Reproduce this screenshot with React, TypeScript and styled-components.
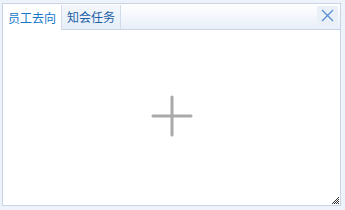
import React, { useState } from "react";
import styled, { createGlobalStyle } from "styled-components";

const GlobalStyle = createGlobalStyle`
    html, body {
        margin: 0;
        padding: 0;
        background: #eef2fa;
        font-family: "Noto Sans CJK SC", "Liberation Sans", sans-serif;
    }
`;

// 바깥 영역
const Page = styled.div`
    width: 345px;
    height: 210px;
    padding: 3px 4px 4px 2px;
    box-sizing: border-box;
    background: #eef2fa;
`;

// 패널
const Panel = styled.div`
    width: 100%;
    height: 100%;
    box-sizing: border-box;
    border: 1px solid #c9d5e5;
    background: #ffffff;
    display: flex;
    flex-direction: column;
    position: relative;
`;

// 탭 헤더
const TabBar = styled.div`
    height: 26px;
    box-sizing: border-box;
    display: flex;
    align-items: flex-end;
    padding-left: 0;
    background: linear-gradient(to bottom, #ffffff, #e8eff9);
    border-bottom: 1px solid #c9d5e5;
`;

const Tab = styled.div<{ $active?: boolean }>`
    height: 24px;
    box-sizing: border-box;
    padding: 0 5px;
    display: flex;
    align-items: center;
    font-size: 12px;
    line-height: 1;
    color: ${(p) => (p.$active ? "#1677c9" : "#1b5fa6")};
    background: ${(p) => (p.$active ? "#ffffff" : "linear-gradient(to bottom, #f4f7fc, #e6eef8)")};
    border-right: 1px solid #d3dcea;
    margin-bottom: ${(p) => (p.$active ? "-1px" : "0")};
    height: ${(p) => (p.$active ? "25px" : "24px")};
    cursor: pointer;
`;

const Spacer = styled.div`
    flex: 1;
`;

const CloseButton = styled.button`
    width: 21px;
    height: 20px;
    margin: 0 2px 2px 0;
    align-self: center;
    padding: 0;
    border: none;
    background: #eaf0f8;
    display: flex;
    align-items: center;
    justify-content: center;
    cursor: pointer;
`;

// 본문
const Body = styled.div`
    flex: 1;
    display: flex;
    align-items: center;
    justify-content: center;
    padding-bottom: 4px;
`;

const Grip = styled.svg`
    position: absolute;
    right: 1px;
    bottom: 1px;
`;

export default function App() {
    const [active, setActive] = useState(0);
    const tabs = ["员工去向", "知会任务"];
    return (
        <>
            <GlobalStyle />
            <Page>
                <Panel>
                    <TabBar>
                        {tabs.map((t, i) => (
                            <Tab key={t} $active={active === i} onClick={() => setActive(i)}>
                                {t}
                            </Tab>
                        ))}
                        <Spacer />
                        <CloseButton>
                            <svg width="13" height="13" viewBox="0 0 13 13">
                                <path d="M1 1 L12 12 M12 1 L1 12" stroke="#5b8fd1" strokeWidth="1.4" />
                            </svg>
                        </CloseButton>
                    </TabBar>
                    <Body>
                        <svg width="42" height="42" viewBox="0 0 42 42">
                            <path d="M21 2 V40 M2 21 H40" stroke="#a9a9a9" strokeWidth="3" strokeLinecap="round" />
                        </svg>
                    </Body>
                    <Grip width="7" height="7" viewBox="0 0 7 7">
                        <path d="M6 0h1v1h-1zM4 2h1v1h-1zM5 1h1v1h-1zM6 2h1v1h-1zM2 4h1v1h-1zM3 3h1v1h-1zM4 4h1v1h-1zM5 3h1v1h-1zM6 4h1v1h-1zM0 6h1v1h-1zM1 5h1v1h-1zM2 6h1v1h-1zM3 5h1v1h-1zM4 6h1v1h-1zM5 5h1v1h-1zM6 6h1v1h-1z" fill="#333" />
                    </Grip>
                </Panel>
            </Page>
        </>
    );
}
